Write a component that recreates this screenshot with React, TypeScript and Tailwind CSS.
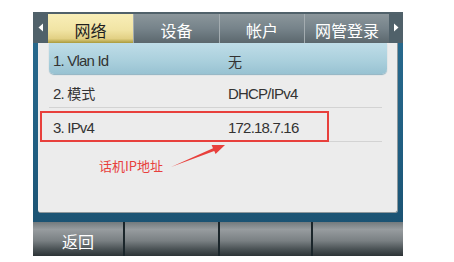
const latin = "font-['Liberation_Sans','Noto_Sans_CJK_SC',sans-serif]";
const cjk = "font-['Noto_Sans_CJK_SC',sans-serif]";

const TABS = [
  { label: '网络', w: 'w-[85px]', active: true },
  { label: '设备', w: 'w-[86px]', active: false },
  { label: '帐户', w: 'w-[85px]', active: false },
  { label: '网管登录', w: 'w-[85px]', active: false },
];

const SOFTKEYS = [
  { label: '返回', w: 'w-[90px]' },
  { label: '', w: 'w-[95px]' },
  { label: '', w: 'w-[93px]' },
  { label: '', w: 'w-[92px]' },
];

function TabBar() {
  return (
    <div className="flex h-[31px] bg-[#50616a]">
      {/* left arrow */}
      <div className="w-[15px] flex items-center justify-center">
        <svg width="6" height="9" viewBox="0 0 6 9">
          <path d="M5 0.5 L0.5 4.5 L5 8.5 Z" fill="#ffffff" />
        </svg>
      </div>
      {TABS.map((t) => (
        <div
          key={t.label}
          className={`${t.w} mt-[2px] flex items-center justify-center text-[16px] leading-none ${cjk} ${
            t.active
              ? 'text-[#1e1e1e] bg-[linear-gradient(to_bottom,#f8eeb8_0%,#f1e4a4_55%,#e2d084_85%,#a99a3c_100%)]'
              : 'text-white border-l border-[#a3acb0] bg-[linear-gradient(to_bottom,#8b969b_0%,#76838a_50%,#5b676d_100%)]'
          }`}
        >
          <span className="pt-[2px]">{t.label}</span>
        </div>
      ))}
      {/* right arrow */}
      <div className="w-[14px] flex items-center justify-center">
        <svg width="6" height="9" viewBox="0 0 6 9">
          <path d="M1 0.5 L5.5 4.5 L1 8.5 Z" fill="#ffffff" />
        </svg>
      </div>
    </div>
  );
}

function Row({ label, value, sel, cjkLabel, cjkValue }: { label: string; value: string; sel?: boolean; cjkLabel?: string; cjkValue?: boolean }) {
  return (
    <div
      className={`flex items-center text-[15px] text-[#333] tracking-[-0.8px] ${latin} ${
        sel
          ? 'h-[31px] pt-[5px] rounded-b-[5px] mr-[10px] bg-[linear-gradient(to_bottom,#bfdde8_0%,#a9cfdc_60%,#98c2d2_100%)] shadow-[0_1px_1px_#8fb3c2]'
          : 'h-[34px] pt-[7px] mr-[15px] border-b border-[#d3d3d3]'
      }`}
    >
      <span className="w-[179px] pl-[4px]">
        {label}
        {cjkLabel && <span className={`${cjk} text-[14px] tracking-normal`}>{cjkLabel}</span>}
      </span>
      <span className={cjkValue ? `${cjk} text-[14px] tracking-normal` : ''}>{value}</span>
    </div>
  );
}

function Panel() {
  return (
    <div className="flex-1 mx-[5px] bg-[#ececec] rounded-b-[3px] border-r border-b border-[#8e989c] flex flex-col pl-[11px]">
      <Row label="1. Vlan Id" value="无" sel cjkValue />
      <Row label="2. " cjkLabel="模式" value="DHCP/IPv4" />
      <Row label="3. IPv4" value="172.18.7.16" />
    </div>
  );
}

function SoftKeys() {
  return (
    <div className="flex h-[34px]">
      {SOFTKEYS.map((k, i) => (
        <div
          key={i}
          className={`${k.w} flex items-center justify-center text-white text-[16px] ${cjk} ${
            i > 0 ? 'border-l-2 border-[#1b262b]' : ''
          } bg-[linear-gradient(to_bottom,#737a7d_0%,#979c9f_22%,#7a8083_55%,#4a5255_80%,#2c3336_100%)]`}
        >
          <span className="pt-[4px]">{k.label}</span>
        </div>
      ))}
    </div>
  );
}

export default function App() {
  return (
    <div className="relative w-[454px] h-[262px] bg-white overflow-hidden">
      <div className="ml-[33px] mt-[12px] w-[370px] h-[244px] flex flex-col bg-[linear-gradient(to_bottom,#2a6c90_0%,#1f5d80_60%,#1a4e6c_100%)]">
        <TabBar />
        <div className="flex-1 flex flex-col pb-[9px]">
          <Panel />
        </div>
        <SoftKeys />
      </div>

      {/* annotation: red box */}
      <div className="absolute left-[40px] top-[111px] w-[289px] h-[31px] border-2 border-[#e8403c]" />

      {/* annotation: label */}
      <div className={`absolute left-[99px] top-[157px] text-[13px] leading-[18px] text-[#e8403c] ${cjk}`}>
        话机IP地址
      </div>

      {/* annotation: arrow */}
      <svg className="absolute left-0 top-0 pointer-events-none" width="454" height="262" viewBox="0 0 454 262">
        <polygon
          points="171,167 213,148.3 211.6,145 225,145 215.6,154 214.2,151.1"
          fill="#e8403c"
        />
      </svg>
    </div>
  );
}
